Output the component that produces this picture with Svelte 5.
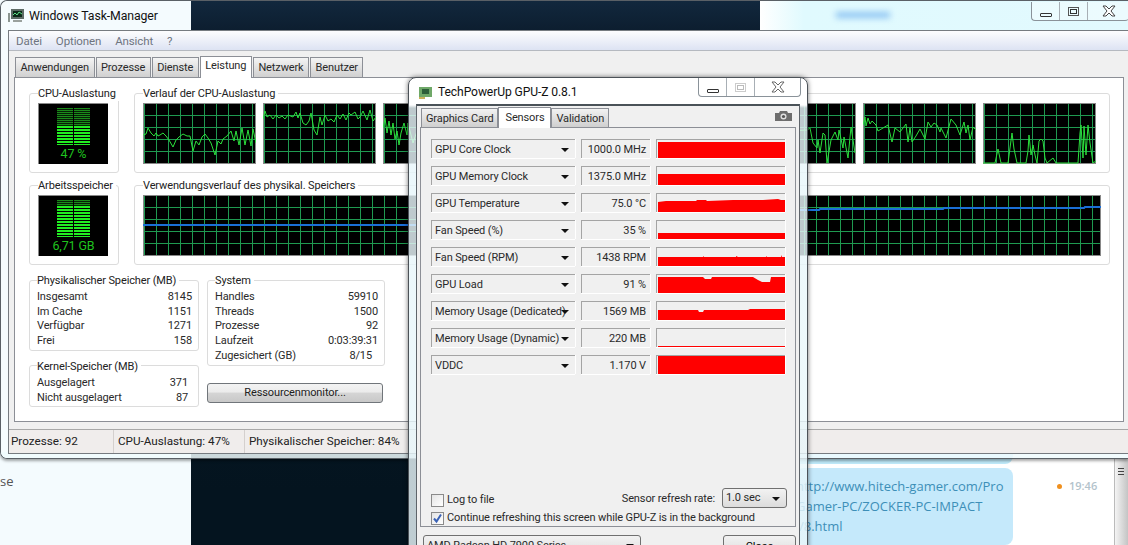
<script lang="ts">
  const tabs = ['Anwendungen', 'Prozesse', 'Dienste', 'Leistung', 'Netzwerk', 'Benutzer'];
  const menu = ['Datei', 'Optionen', 'Ansicht', '?'];

  // one entry per core, points are local px inside a 113x61 plot
  const cpu = [
    '0,32 3,31 5,25 8,30 11,33 13,30 15,33 17,32 20,30 23,33 26,37 30,44 33,37 36,34 40,31 44,33 47,33 50,48 53,38 56,42 59,34 62,31 65,35 68,40 72,52 75,38 78,41 80,36 84,33 88,28 91,38 93,28 96,42 99,25 102,42 105,27 108,43 110,26 113,40',
    '0,16 2,8 4,14 7,12 10,16 13,12 16,15 19,13 22,16 25,12 30,14 33,9 35,15 37,10 40,20 43,22 46,18 48,10 51,27 54,32 57,14 59,22 62,12 65,18 68,16 71,19 74,12 77,16 80,11 83,17 86,10 88,12 92,9 95,16 97,14 100,8 104,17 107,7 110,18 113,14',
    '0,25 2,15 4,30 6,18 8,32 10,20 12,36 14,28 16,42 18,30 21,20 24,32 25,20 30,40 35,25 40,45 46,22 52,38 60,30',
    '',
    '',
    '0,30 64,27 67,25 70,40 74,45 75,37 77,50 80,30 82,32 84,60 88,37 92,29 95,37 96,27 100,45 101,34 105,55 108,24 112,50',
    '0,22 2,14 3,23 5,15 7,21 9,18 13,22 15,28 20,25 25,22 29,39 32,25 37,29 43,21 45,39 47,25 49,39 53,33 57,26 62,36 65,19 68,24 71,20 74,22 77,29 78,25 83,35 88,16 93,22 97,32 101,19 103,30 105,22 107,37 110,24 113,27',
    '0,60 12,60 15,46 18,60 25,60 27,45 29,30 31,46 34,60 43,60 45,48 46,32 48,52 50,42 52,52 54,60 56,38 58,36 60,38 62,55 64,60 70,55 73,60 95,60 97,30 98,22 100,55 101,23 103,52 105,22 107,40 110,60 113,58',
  ];

  const physical = [['Insgesamt', '8145'], ['Im Cache', '1151'], ['Verfügbar', '1271'], ['Frei', '158']];
  const kernel = [['Ausgelagert', '371'], ['Nicht ausgelagert', '87']];
  const system = [['Handles', '59910'], ['Threads', '1500'], ['Prozesse', '92'], ['Laufzeit', '0:03:39:31'], ['Zugesichert (GB)', '8/15']];

  // shape = top edge of the red area, 127x19 plot
  const sensors = [
    { name: 'GPU Core Clock', value: '1000.0 MHz', shape: '0,3 127,3' },
    { name: 'GPU Memory Clock', value: '1375.0 MHz', shape: '0,8 127,8' },
    { name: 'GPU Temperature', value: '75.0 °C', shape: '0,9 8,8 38,8 39,7 48,7 49,8 75,7 105,7 120,6 123,7 127,7' },
    { name: 'Fan Speed (%)', value: '35 %', shape: '0,13 127,13' },
    { name: 'Fan Speed (RPM)', value: '1438 RPM', shape: '0,10 45,10 45,9 46,10 78,10 78,9 80,10 108,10 108,9 109,10 123,10 123,8 124,10 127,10' },
    { name: 'GPU Load', value: '91 %', shape: '0,3 45,3 47,5 53,5 54,3 95,3 100,6 104,8 112,8 113,3 127,3' },
    { name: 'Memory Usage (Dedicated)', value: '1569 MB', shape: '0,9 40,9 41,11 45,11 46,9 90,9 92,8 127,8' },
    { name: 'Memory Usage (Dynamic)', value: '220 MB', shape: '0,18 127,18' },
    { name: 'VDDC', value: '1.170 V', shape: '0,1 127,1' },
  ];
</script>

<div class="desk">
  <div class="back-left"><span class="se">se</span></div>
  <div class="back-dark"></div>
  <div class="back-right">
    <div class="blurred"></div>
    <div class="bubble-end"></div>
    <div class="bubble">http://www.hitech-gamer.com/Pro<br />Gamer-PC/ZOCKER-PC-IMPACT<br />V8.html</div>
    <div class="stamp"><i></i>19:46</div>
    <div class="scroll"><b></b><b></b><b></b></div>
  </div>

  <section class="taskman">
    <header class="tm-title">
      <svg class="tm-icon" width="17" height="16" viewBox="0 0 17 16">
        <rect x="3" y="1" width="13" height="10" fill="#5d6b66" />
        <rect x="5" y="3" width="9" height="6" fill="#0c2a18" />
        <path d="M5 7l2-2 2 2 2-3 3 2" fill="none" stroke="#5fe08a" />
        <rect x="0" y="5" width="2" height="9" fill="#8b9590" />
        <rect x="5" y="12" width="9" height="2" fill="#9aa19d" />
      </svg>
      <span>Windows Task-Manager</span>
    </header>
    <div class="caption tm-caption">
      <span class="cap min"><i></i></span>
      <span class="cap max"><i></i></span>
      <span class="cap close">
        <svg width="14" height="12" viewBox="0 0 14 12"><path d="M1 1h3l3 3 3-3h3L9 6l4 5h-3L7 8l-3 3H1l4-5z" fill="#fff" stroke="#444" /></svg>
      </span>
    </div>

    <div class="tm-body">
      <nav class="menu">
        {#each menu as m}<span>{m}</span>{/each}
      </nav>
      <div class="tabs">
        {#each tabs as t}<span class="tab" class:active={t === 'Leistung'}>{t}</span>{/each}
      </div>

      <div class="panel">
        <div class="row-top">
          <fieldset class="box">
            <legend>CPU-Auslastung</legend>
            <div class="meter">
              <div class="bars"><div class="lit" style="height: 52%"></div></div>
              <span>47 %</span>
            </div>
          </fieldset>
          <fieldset class="box">
            <legend>Verlauf der CPU-Auslastung</legend>
            <div class="plots">
              {#each cpu as pts}
                <div class="plot">
                  <svg width="113" height="61"><polyline points={pts} /></svg>
                </div>
              {/each}
            </div>
          </fieldset>
        </div>

        <div class="row-top second">
          <fieldset class="box">
            <legend>Arbeitsspeicher</legend>
            <div class="meter mem">
              <div class="bars"><div class="lit" style="height: 84%"></div></div>
              <span>6,71 GB</span>
            </div>
          </fieldset>
          <fieldset class="box">
            <legend>Verwendungsverlauf des physikal. Speichers</legend>
            <div class="plot wide">
              <svg width="958" height="61">
                <polyline class="blue" points="0,30 420,30 430,15 676,15 677,14 800,14 801,13 941,13 942,12 958,12" />
              </svg>
            </div>
          </fieldset>
        </div>

        <div class="row-bottom">
          <div class="col-left">
            <fieldset class="box list phys">
              <legend>Physikalischer Speicher (MB)</legend>
              {#each physical as [k, v]}
                <div class="kv"><span>{k}</span><span>{v}</span></div>
              {/each}
            </fieldset>
            <fieldset class="box list kern">
              <legend>Kernel-Speicher (MB)</legend>
              {#each kernel as [k, v]}
                <div class="kv"><span>{k}</span><span>{v}</span></div>
              {/each}
            </fieldset>
          </div>
          <div class="col-right">
            <fieldset class="box list sys">
              <legend>System</legend>
              {#each system as [k, v]}
                <div class="kv" class:commit={v === '8/15'}><span>{k}</span><span>{v}</span></div>
              {/each}
            </fieldset>
            <button class="res-btn">Ressourcenmonitor...</button>
          </div>
        </div>
      </div>

      <footer class="status">
        <span class="s1">Prozesse: 92</span>
        <span class="s2">CPU-Auslastung: 47%</span>
        <span class="s3">Physikalischer Speicher: 84%</span>
      </footer>
    </div>
  </section>

  <section class="gpuz">
    <header class="gz-title">
      <svg width="15" height="13" viewBox="0 0 15 13">
        <rect x="1" y="1" width="13" height="10" fill="#6fa868" />
        <rect x="4" y="3" width="7" height="5" fill="#2d5f3a" />
        <rect x="1" y="11" width="6" height="2" fill="#c9b25a" />
      </svg>
      <span>TechPowerUp GPU-Z 0.8.1</span>
    </header>
    <div class="caption gz-caption">
      <span class="cap min"><i></i></span>
      <span class="cap max dim"><i></i></span>
      <span class="cap close">
        <svg width="14" height="12" viewBox="0 0 14 12"><path d="M1 1h3l3 3 3-3h3L9 6l4 5h-3L7 8l-3 3H1l4-5z" fill="#fff" stroke="#666" /></svg>
      </span>
    </div>

    <div class="gz-frame">
      <div class="gz-tabs">
        <span class="gz-tab">Graphics Card</span>
        <span class="gz-tab active">Sensors</span>
        <span class="gz-tab">Validation</span>
        <svg class="camera" width="17" height="10" viewBox="0 0 17 10">
          <path d="M0 2h4l1-2h7l1 2h4v8H0z" fill="#6d6d6d" />
          <circle cx="8.5" cy="5.5" r="3" fill="#e0e0e0" />
          <circle cx="8.5" cy="5.5" r="1.6" fill="#555" />
        </svg>
      </div>

      <div class="gz-panel">
        <div class="sensors">
          {#each sensors as s}
            <div class="sensor">
              <div class="sunken pick">
                <span>{s.name}</span><i class="arrow"></i>
              </div>
              <div class="sunken val">{s.value}</div>
              <div class="sunken chart">
                <svg width="127" height="19"><polygon points="0,19 {s.shape} 127,19" /></svg>
              </div>
            </div>
          {/each}
        </div>

        <div class="gz-options">
          <div class="opt-top">
            <label class="check log"><i class="tick"></i>Log to file</label>
            <div class="rate">
              <span>Sensor refresh rate:</span>
              <div class="combo small">1.0 sec<i class="arrow"></i></div>
            </div>
          </div>
          <label class="check">
            <i class="tick">
              <svg width="11" height="11" viewBox="0 0 11 11"><path d="M2 5.5l2.5 3L9 1.5" fill="none" stroke="#3b62b5" stroke-width="2" /></svg>
            </i>Continue refreshing this screen while GPU-Z is in the background
          </label>
        </div>
      </div>

      <div class="gz-foot">
        <div class="combo card">AMD Radeon HD 7900 Series<i class="arrow"></i></div>
        <button class="close-btn">Close</button>
      </div>
    </div>
  </section>
</div>

<style>
:global(body) { margin: 0; }

.desk {
  position: relative;
  display: flex;
  width: 1128px;
  height: 545px;
  overflow: hidden;
  font-family: Roboto, sans-serif;
  font-size: 11px;
  letter-spacing: -0.12px;
  color: #2a2a2a;
}

/* backdrop */
.back-left { position: relative; width: 191px; background: #f4fbfe; }
.se { position: absolute; left: 0; top: 472px; font: 13px 'Open Sans', sans-serif; letter-spacing: 0; color: #555; }
.back-dark { width: 569px; background: linear-gradient(#12283e, #0c1d2e 6%, #04141f 90%); }
.back-right {
  position: relative;
  flex: 1;
  background: linear-gradient(90deg, #fff 0, #e0fafe 12%, #e2f9fe 100%) top / 100% 30px no-repeat #fff;
}
.blurred { position: absolute; left: 76px; top: 12px; width: 54px; height: 6px; background: #8cc3f2; filter: blur(3px); }
.bubble-end { position: absolute; left: 0; top: 440px; width: 253px; height: 24px; border-radius: 0 0 8px 0; background: #bfeafa; }
.bubble {
  position: absolute;
  left: 36px;
  top: 468px;
  width: 217px;
  height: 77px;
  box-sizing: border-box;
  padding-top: 8px;
  border-radius: 8px;
  background: #c5e9fb;
  font: 13px/20px 'Open Sans', sans-serif;
  letter-spacing: 0;
  color: #3d8fb8;
  white-space: nowrap;
}
.stamp {
  position: absolute;
  left: 297px;
  top: 478px;
  display: flex;
  align-items: center;
  gap: 7px;
  font: 600 11px/16px 'Open Sans', sans-serif;
  letter-spacing: 0;
  color: #b3c3cc;
}
.stamp i { width: 5px; height: 5px; border-radius: 50%; background: #f0901e; }
.scroll {
  position: absolute;
  right: 0;
  top: 459px;
  bottom: 0;
  width: 14px;
  padding: 9px 0 0 3px;
  box-sizing: border-box;
  border-left: 1px solid #bbb;
  background: linear-gradient(90deg, #f4f4f4, #c4c4c4);
}
.scroll b { display: block; width: 6px; height: 1px; margin-bottom: 2px; background: #444; }

/* task manager */
.taskman {
  position: absolute;
  left: 0;
  top: 0;
  width: 1128px;
  height: 459px;
  box-sizing: border-box;
  padding: 0 0 6px 7px;
  border: solid #5a6066;
  border-width: 1px 0 1px 1px;
  border-radius: 7px 0 0 7px;
  box-shadow: 0 2px 3px rgba(0, 0, 0, 0.35);
}
.tm-title {
  display: flex;
  align-items: center;
  gap: 4px;
  height: 29px;
  font-size: 12.3px;
  letter-spacing: -0.1px;
  color: #111;
}
.tm-title::before {
  content: '';
  position: absolute;
  inset: 0 auto 0 0;
  width: 7px;
  border-radius: 7px 0 0 7px;
  background: #f6fcfe;
}
.tm-title::after {
  content: '';
  position: absolute;
  left: 0;
  right: 0;
  bottom: 0;
  height: 6px;
  border-radius: 0 0 0 7px;
  background: rgba(240, 252, 254, 0.85);
}
.tm-icon { margin-top: 1px; position: relative; }
.tm-title span { position: relative; }

.caption {
  position: absolute;
  display: flex;
  height: 19px;
  box-sizing: border-box;
  border: 1px solid #8a9299;
  border-top: 0;
  border-radius: 0 0 4px 4px;
  background: rgba(255, 255, 255, 0.35);
}
.tm-caption { left: 1030px; top: 1px; width: 98px; border-right: 0; }
.gz-caption { left: 289px; top: 0; width: 103px; }
.cap {
  display: flex;
  align-items: center;
  justify-content: center;
  width: 27px;
  border-right: 1px solid #a8afb5;
}
.cap.close { flex: 1; border-right: 0; }
.cap.min i { width: 10px; height: 2px; margin-top: 7px; border: 1px solid #333; border-radius: 1px; }
.cap.max i { width: 5px; height: 3px; border: 1px solid #333; outline: 1px solid #555; outline-offset: 1px; }
.cap.dim i { border-color: #bbb; outline-color: #ccc; }

.tm-body {
  position: relative;
  display: flex;
  flex-direction: column;
  height: 422px;
  border: 1px solid #767b80;
  border-right: 0;
  background: #f0f0f0;
}
.menu {
  display: flex;
  gap: 14px;
  height: 19px;
  padding-left: 7px;
  align-items: center;
  border-bottom: 1px solid #b5b9c0;
  background: linear-gradient(#fdfdfe, #dde3f3);
  font-size: 11.5px;
  color: #6e7480;
}
.tabs {
  display: flex;
  height: 26px;
  padding: 6px 0 0 6px;
  box-sizing: border-box;
  align-items: flex-end;
  gap: 1px;
  position: relative;
  z-index: 1;
}
.tab {
  height: 19px;
  padding: 0 4.5px;
  border: 1px solid #8c8f96;
  border-bottom: 0;
  background: linear-gradient(#f4f4f4, #d0d0d0);
  line-height: 19px;
}
.tab.active {
  height: 21px;
  margin-bottom: -1px;
  background: #fff;
  line-height: 18px;
}
.panel {
  flex: 1;
  margin: 0 4px 7px 5px;
  padding: 7px 0 0 14px;
  border: 1px solid #8c8f96;
  background: #fff;
}
.row-top {
  display: grid;
  grid-template-columns: 90px 976px;
  gap: 15px;
  height: 88px;
}
.row-top.second { margin-top: 4px; }
.box {
  min-width: 0;
  margin: 0;
  padding: 2px 8px 7px;
  box-sizing: border-box;
  border: 1px solid #dcdcdc;
  border-radius: 3px;
}
legend {
  position: relative;
  top: 1px;
  padding: 0 3px 0 0;
  line-height: 16px;
  color: #222;
  white-space: nowrap;
}
.meter {
  position: relative;
  width: 70px;
  height: 61px;
  border: solid #888;
  border-width: 1px 0 0 1px;
  box-sizing: border-box;
  background: #000;
  color: #1fc41f;
  text-align: center;
  font-size: 12.5px;
}
.meter span { position: absolute; left: 0; right: 0; top: 42px; line-height: 16px; }
.bars {
  position: absolute;
  left: 18px;
  top: 4px;
  width: 33px;
  height: 37px;
  background:
    linear-gradient(90deg, transparent 16px, #000 16px, #000 17px, transparent 17px),
    repeating-linear-gradient(#1a8a1a 0 1px, #062006 1px 2px);
}
.lit {
  position: absolute;
  left: 0;
  right: 0;
  bottom: 0;
  background:
    linear-gradient(90deg, transparent 16px, #000 16px, #000 17px, transparent 17px),
    repeating-linear-gradient(#22ee22 0 2px, #000 2px 3px);
}
.plots { display: flex; gap: 7px; }
.plot {
  position: relative;
  width: 113px;
  height: 61px;
  flex: none;
  box-shadow: inset 1px 1px 0 #888, inset -1px -1px 0 #888;
  background-color: #000;
  background-image:
    linear-gradient(#1f9a50 1px, transparent 1px),
    linear-gradient(90deg, #1f9a50 1px, transparent 1px);
  background-size: 12px 12px;
  background-position: 1px 0;
}
.plot.wide { width: 958px; }
.plot svg { display: block; }
polyline { fill: none; stroke: #2be03c; stroke-width: 1; }
polyline.blue { stroke: #1a6fd8; stroke-width: 2; }

.row-bottom { display: flex; gap: 8px; margin-top: 7px; }
.col-left, .col-right { display: flex; flex-direction: column; }
.col-left { width: 170px; gap: 7px; }
.col-right { width: 178px; }
.list { padding: 2px 6px 1px 7px; }
.kv { display: flex; justify-content: space-between; line-height: 14.7px; white-space: nowrap; }
.kern { padding-right: 10px; }
.commit span:last-child { margin-right: 6px; }
.res-btn {
  width: 176px;
  height: 20px;
  margin-top: 17px;
  padding: 0;
  border: 1px solid #70757a;
  border-radius: 3px;
  background: linear-gradient(#f3f3f3 0, #ebebeb 45%, #d5d5d5 50%, #c8c8c8);
  font: inherit;
  letter-spacing: inherit;
  color: #222;
}
.status {
  display: flex;
  height: 23px;
  align-items: center;
  margin-top: auto;
  border-top: 1px solid #a8a8a8;
  background: #f0edec;
  font-size: 11.7px;
  letter-spacing: 0;
  color: #222;
}
.status span { height: 100%; line-height: 23px; box-sizing: border-box; }
.s1 { width: 105px; padding-left: 2px; border-right: 1px solid #d4d0ce; }
.s2 { width: 131px; padding-left: 4px; border-right: 1px solid #d4d0ce; }
.s3 { padding-left: 4px; }

/* gpu-z window */
.gpuz {
  position: absolute;
  left: 408px;
  top: 77px;
  width: 400px;
  height: 480px;
  box-sizing: border-box;
  padding: 0 7px;
  border: 1px solid #4c5258;
  border-radius: 8px 8px 0 0;
  background: linear-gradient(#fff 0, #fff 27px, rgba(232, 246, 250, 0.82) 30px);
  box-shadow: 0 0 5px rgba(0, 0, 0, 0.55);
}
.gz-title {
  display: flex;
  align-items: center;
  gap: 5px;
  height: 26px;
  padding: 2px 0 0 2px;
  box-sizing: border-box;
  font-size: 12.1px;
  letter-spacing: -0.1px;
  color: #111;
}
.gz-frame {
  height: 460px;
  padding: 2px 3px 0;
  border: 1px solid #5e646a;
  border-top: 2px solid #4a5258;
  background: #f0f0f0;
}
.gz-tabs {
  position: relative;
  display: flex;
  align-items: flex-end;
  height: 19px;
  padding-left: 1px;
}
.gz-tab {
  height: 18px;
  padding: 0 4px;
  border: 1px solid #8c8f96;
  border-bottom: 0;
  background: linear-gradient(#f2f2f2, #cfcfcf);
  line-height: 19px;
}
.gz-tab.active {
  height: 20px;
  margin-bottom: -1px;
  position: relative;
  z-index: 1;
  padding: 0 6px;
  background: #fff;
  line-height: 19px;
}
.camera { position: absolute; right: 4px; top: 3px; }
.gz-panel {
  display: flex;
  flex-direction: column;
  justify-content: space-between;
  height: 400px;
  box-sizing: border-box;
  padding: 11px 8px 1px 10px;
  border: 1px solid #8c8f96;
  background: #f0f0f0;
}
.sensors { display: flex; flex-direction: column; gap: 8px; }
.sensor { display: flex; gap: 6px; }
.sunken {
  height: 19px;
  box-sizing: border-box;
  border: solid #a4a4a4;
  border-width: 1px 0 0 1px;
  box-shadow: 0 1px 0 #fff, 1px 0 0 #fff;
  line-height: 20px;
}
.pick {
  position: relative;
  width: 144px;
  padding-left: 3px;
  white-space: nowrap;
}
.arrow {
  position: absolute;
  right: 6px;
  top: 8px;
  border: 4px solid transparent;
  border-top-color: #111;
  border-bottom: 0;
}
.val { width: 69px; padding-right: 4px; text-align: right; white-space: nowrap; }
.chart { width: 129px; padding-left: 1px; }
.chart svg { display: block; margin-top: -1px; }
polygon { fill: #f00; }
.gz-options { display: flex; flex-direction: column; gap: 3px; }
.opt-top { display: flex; justify-content: space-between; align-items: center; }
.check { display: flex; align-items: center; gap: 3px; line-height: 14px; white-space: nowrap; }
.check.log { align-self: flex-end; margin-bottom: 1px; }
.tick {
  display: flex;
  width: 13px;
  height: 13px;
  box-sizing: border-box;
  border: 1px solid #8a8a8a;
  background: linear-gradient(135deg, #e4e4e4, #fff);
}
.rate { display: flex; align-items: center; gap: 7px; }
.combo {
  position: relative;
  box-sizing: border-box;
  border: 1px solid #707070;
  border-radius: 3px;
  background: linear-gradient(#f2f2f2, #dcdcdc);
}
.combo.small { width: 65px; height: 20px; padding-left: 3px; line-height: 18px; }
.gz-foot { display: flex; justify-content: space-between; margin-top: 8px; padding-left: 3px; }
.combo.card { width: 218px; height: 22px; padding-left: 3px; line-height: 20px; }
.close-btn {
  width: 73px;
  height: 22px;
  border: 1px solid #707070;
  border-radius: 3px;
  background: linear-gradient(#f2f2f2, #dcdcdc);
  font: inherit;
}
</style>
